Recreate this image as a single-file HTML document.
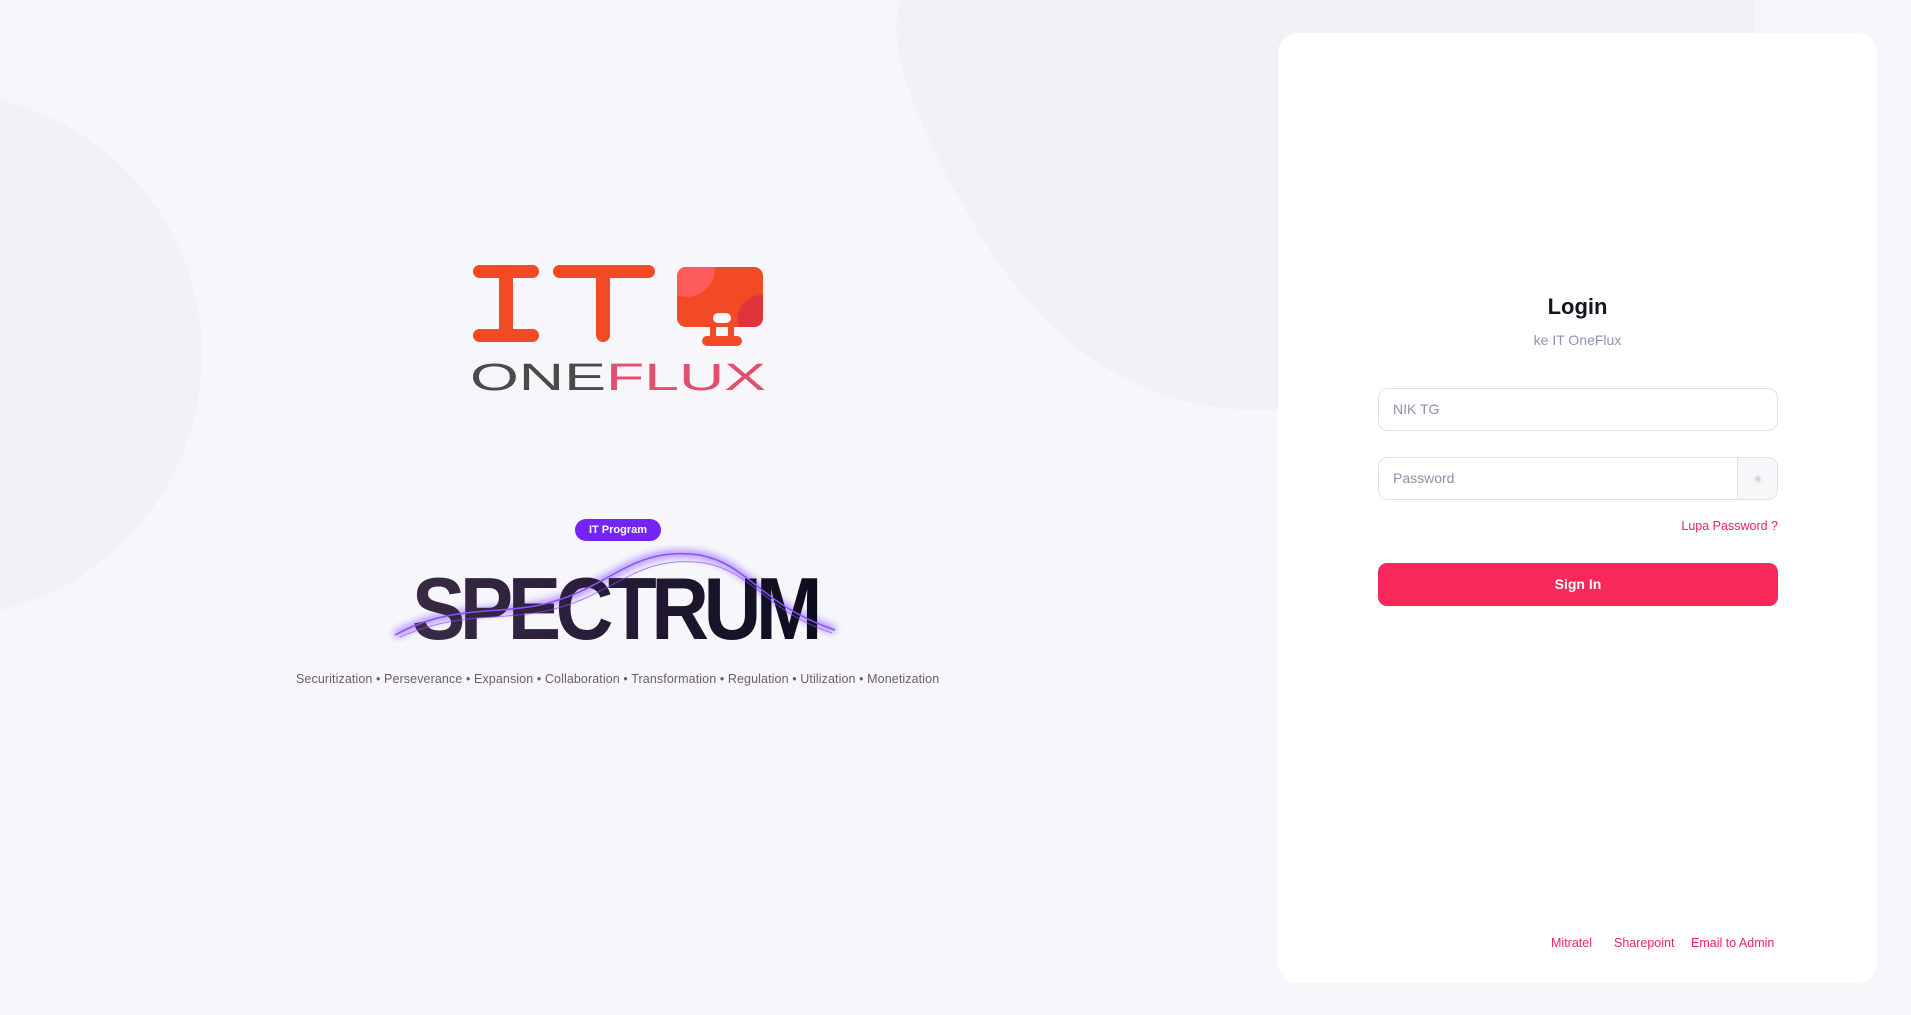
<!DOCTYPE html>
<html><head><meta charset="utf-8"><style>
*{margin:0;padding:0;box-sizing:border-box}
body{width:1911px;height:1015px;background:#f7f7fb;font-family:"Liberation Sans",sans-serif;position:relative;overflow:hidden}
.abs{position:absolute}
.card{left:1278px;top:33px;width:599px;height:950px;background:#fff;border-radius:20px}
.inp{position:absolute;left:1378px;width:400px;height:43px;border:1px solid #dfe1ec;border-radius:10px;background:#fff;font-size:14px;color:#8b90a8;padding:0 14px;line-height:41px}
.lnk{color:#f0245a;font-size:12.5px;position:absolute}
</style></head><body>
<svg class="abs" style="left:0;top:0" width="1911" height="1015">
<circle cx="-60" cy="355" r="262" fill="#f1f1f6"/>
<path d="M900 0 L1755 0 L1755 110 C1700 250 1500 420 1250 410 C1120 405 1030 330 960 200 C900 90 890 40 900 0Z" fill="#f1f1f6"/>
</svg>
<div class="abs card"></div>
<svg class="abs" style="left:460px;top:255px" width="320" height="150">
<g fill="#f24a24">
<rect x="13" y="10" width="66" height="13" rx="6.5"/><rect x="13" y="74" width="66" height="13" rx="6.5"/><rect x="39" y="10" width="14" height="77" rx="7"/>
<rect x="93" y="10" width="102" height="13" rx="6.5"/><rect x="136" y="10" width="14" height="77" rx="7"/>
<rect x="217" y="12" width="86" height="60" rx="9"/>
<rect x="242" y="81" width="40" height="10" rx="5"/><rect x="250" y="68" width="6" height="16"/><rect x="268" y="68" width="6" height="16"/>
</g>
<path d="M226 12 H255 A 28 28 0 0 1 217 40 V21 A9 9 0 0 1 226 12Z" fill="#fd5c5a"/>
<path d="M303 40 V63 A9 9 0 0 1 294 72 H279 A24 24 0 0 1 303 40Z" fill="#e0343a"/>
<rect x="253" y="58" width="18" height="10" rx="5" fill="#fff"/>
<text x="10" y="135" font-family="Liberation Sans" font-size="38" fill="#4a4a4a" textLength="136" lengthAdjust="spacingAndGlyphs">ONE</text>
<text x="146" y="135" font-family="Liberation Sans" font-size="38" fill="#e2506f" textLength="160" lengthAdjust="spacingAndGlyphs">FLUX</text>
</svg>
<div class="abs" style="left:575px;top:519px;width:86px;height:22px;border-radius:11px;background:#7424f6;color:#fff;font-size:11px;font-weight:bold;text-align:center;line-height:22px">IT Program</div>
<svg class="abs" style="left:370px;top:545px" width="480" height="110">
<defs><linearGradient id="g" x1="0" x2="1"><stop offset="0" stop-color="#3a2a44"/><stop offset=".4" stop-color="#2a1f3c"/><stop offset="1" stop-color="#0e0c1c"/></linearGradient>
<filter id="b"><feGaussianBlur stdDeviation="4"/></filter></defs>
<path d="M25 90 C80 60 120 70 170 60 C240 45 260 0 330 10 C380 20 390 60 465 85" stroke="#7a3cff" stroke-width="6" fill="none" filter="url(#b)" opacity=".7"/>
<text x="42" y="94" font-family="Liberation Sans" font-weight="bold" font-size="88" fill="url(#g)" textLength="405" lengthAdjust="spacingAndGlyphs" letter-spacing="-6">SPECTRUM</text>
<path d="M25 90 C80 60 120 70 170 60 C240 45 260 0 330 10 C380 20 390 60 465 85" stroke="#8a50ff" stroke-width="1.5" fill="none"/>
<path d="M30 92 C90 66 130 76 175 66 C245 52 265 8 335 18 C385 28 395 66 462 88" stroke="#8a50ff" stroke-width="1" fill="none" opacity=".7"/>
</svg>
<div class="abs" style="left:290px;top:672px;width:660px;font-size:12.5px;color:#6e5a6e;white-space:nowrap;letter-spacing:0.1px;padding-left:6px">Securitization • Perseverance • Expansion • Collaboration • Transformation • Regulation • Utilization • Monetization</div>
<div class="abs" style="left:1278px;top:294px;width:599px;text-align:center;font-size:22px;font-weight:bold;color:#15151f">Login</div>
<div class="abs" style="left:1278px;top:332px;width:599px;text-align:center;font-size:14px;color:#8b93b3">ke IT OneFlux</div>
<div class="inp" style="top:388px">NIK TG</div>
<div class="inp" style="top:457px">Password</div>
<div class="abs" style="left:1737px;top:458px;width:40px;height:41px;background:#f7f7fa;border-left:1px solid #dfe1ec;border-radius:0 10px 10px 0"><div style="width:8px;height:8px;border-radius:50%;background:#cfd1da;margin:17px auto;border:2px solid #e7e8ee"></div></div>
<div class="lnk" style="right:133px;top:519px">Lupa Password ?</div>
<div class="abs" style="left:1378px;top:563px;width:400px;height:43px;border-radius:9px;background:#f9285a;color:#fff;font-weight:bold;font-size:14px;text-align:center;line-height:43px">Sign In</div>
<div class="lnk" style="left:1551px;top:936px">Mitratel</div>
<div class="lnk" style="left:1614px;top:936px">Sharepoint</div>
<div class="lnk" style="left:1691px;top:936px">Email to Admin</div>
</body></html>
